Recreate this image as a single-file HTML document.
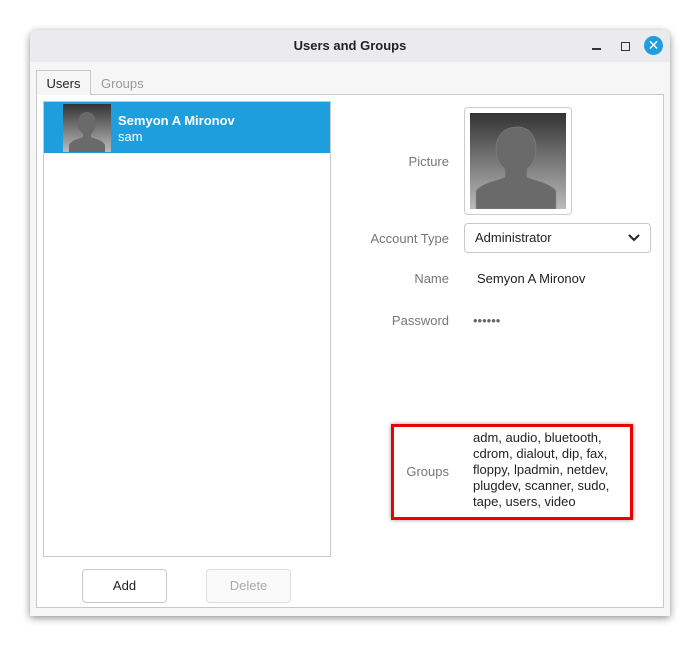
<!DOCTYPE html>
<html><head><style>
*{margin:0;padding:0;box-sizing:border-box}
body{width:700px;height:646px;background:#fff;font-family:"Liberation Sans",sans-serif;position:relative;overflow:hidden}
.win{position:absolute;left:30px;top:30px;width:640px;height:586px;background:#f6f6f6;border-radius:8px 8px 0 0;box-shadow:0 2px 8px rgba(0,0,0,.45);overflow:hidden}
.tb{position:absolute;left:0;top:0;width:640px;height:32px;background:#ebebed;text-align:center;font-weight:bold;font-size:13px;line-height:32px;color:#222}
.a{position:absolute}
.lbl{position:absolute;color:#777;font-size:13px;text-align:right}
.av{background:linear-gradient(#333,#bbb);overflow:hidden}
</style></head><body>
<div class="win">
<div class="tb">Users and Groups</div>
<div class="a" style="left:562px;top:18px;width:9px;height:1.5px;background:#333"></div>
<div class="a" style="left:591px;top:12px;width:9px;height:9px;border:1.5px solid #333"></div>
<div class="a" style="left:614px;top:6px;width:19px;height:19px;border-radius:50%;background:#1f9ede;color:#fff;font-size:14px;line-height:19px;text-align:center">✕</div>
<div class="a" style="left:6px;top:64px;width:628px;height:514px;background:#fff;border:1px solid #c8c8cc"></div>
<div class="a" style="left:6px;top:40px;width:55px;height:25px;background:#f6f6f6;border:1px solid #c8c8cc;border-bottom:none;font-size:13px;line-height:26px;text-align:center;color:#222">Users</div>
<div class="a" style="left:71px;top:46px;font-size:13px;color:#999">Groups</div>
<div class="a" style="left:13px;top:71px;width:288px;height:456px;border:1px solid #c8c8cc;background:#fff"></div>
<div class="a" style="left:14px;top:72px;width:286px;height:51px;background:#1f9ede"></div>
<div class="a av" style="left:33px;top:74px;width:48px;height:48px"><svg width="48" height="48"><path d="M24 8c6 0 9 5 9 11s-3 9-5 11v3c4 2 12 3 14 8v8H6v-8c2-5 10-6 14-8v-3c-2-2-5-5-5-11s3-11 9-11z" fill="#6a6a6a"/></svg></div>
<div class="a" style="left:88px;top:83px;color:#fff;font-weight:bold;font-size:13px">Semyon A Mironov</div>
<div class="a" style="left:88px;top:99px;color:#fff;font-size:13px">sam</div>
<div class="a" style="left:52px;top:539px;width:85px;height:34px;border:1px solid #c8c8cc;border-radius:4px;background:#fff;font-size:13px;text-align:center;line-height:32px;color:#222">Add</div>
<div class="a" style="left:176px;top:539px;width:85px;height:34px;border:1px solid #ddd;border-radius:4px;background:#fafafa;font-size:13px;text-align:center;line-height:32px;color:#aaa">Delete</div>
<div class="lbl" style="right:221px;top:124px">Picture</div>
<div class="a" style="left:434px;top:77px;width:108px;height:108px;border:1px solid #ccc;border-radius:4px;background:#fff"></div>
<div class="a av" style="left:440px;top:83px;width:96px;height:96px"><svg width="96" height="96"><path d="M48 14c12 0 18 10 18 22s-5 16-9 20v8c8 4 24 6 29 14v18H6V78c5-8 21-10 29-14v-8c-4-4-9-8-9-20s6-22 22-22z" fill="#6a6a6a" stroke="#888" stroke-width=".5"/></svg></div>
<div class="lbl" style="right:221px;top:201px">Account Type</div>
<div class="a" style="left:434px;top:193px;width:187px;height:30px;border:1px solid #c8c8cc;border-radius:4px;background:#fff;font-size:13px;line-height:28px;padding-left:10px;color:#222">Administrator<svg style="position:absolute;right:10px;top:10px" width="12" height="8"><path d="M1 1l5 5 5-5" stroke="#222" stroke-width="2" fill="none"/></svg></div>
<div class="lbl" style="right:221px;top:241px">Name</div>
<div class="a" style="left:447px;top:241px;font-size:13px;color:#222">Semyon A Mironov</div>
<div class="lbl" style="right:221px;top:283px">Password</div>
<div class="a" style="left:443px;top:283px;font-size:13px;color:#666">••••••</div>
<div class="a" style="left:361px;top:394px;width:242px;height:96px;border:3px solid #e00;box-shadow:0 0 4px rgba(0,0,0,.4)"></div>
<div class="lbl" style="right:221px;top:434px">Groups</div>
<div class="a" style="left:443px;top:400px;font-size:13px;line-height:16px;color:#222">adm, audio, bluetooth,<br>cdrom, dialout, dip, fax,<br>floppy, lpadmin, netdev,<br>plugdev, scanner, sudo,<br>tape, users, video</div>
</div>
</body></html>
